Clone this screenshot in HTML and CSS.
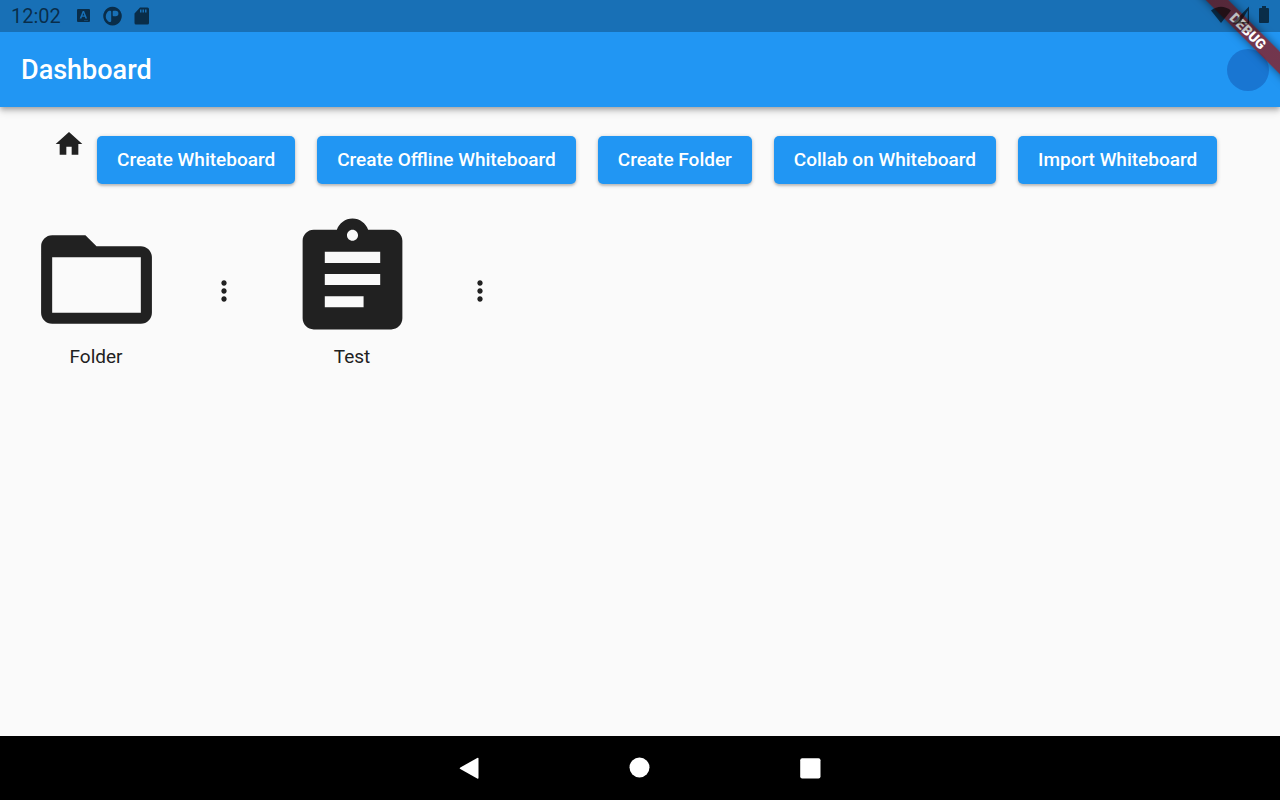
FILE: index.html
```html
<!DOCTYPE html>
<html lang="en">
<head>
<meta charset="utf-8">
<meta name="viewport" content="width=device-width, initial-scale=1">
<title>Dashboard</title>
<link rel="stylesheet" href="styles.css">
</head>
<body>
<div class="status-bar">
  <div class="status-group">
    <span class="clock">12:02</span>
    <svg class="status-left-icons" viewBox="0 0 74 20" width="74" height="20" aria-hidden="true">
      <path fill-rule="evenodd" d="M2 3h11a1 1 0 0 1 1 1v11a1 1 0 0 1-1 1H2a1 1 0 0 1-1-1V4a1 1 0 0 1 1-1zm4.700 2L3.700 12.500h1.700l.6-1.700h2.800l.6 1.700h1.700L8.100 5zm.7 2l.9 2.400H6.500zM8.500 14h1v.8h-1zm2 0h1v.8h-1z"/>
      <path fill-rule="evenodd" d="M36.500 .8a9.300 9.300 0 1 0 .01 0zM33 4.800h1.200a1 1 0 0 1 1 1V15a1 1 0 0 1-1 1H33a6.500 6.500 0 0 1 0-11.200zM37.700 4.800h2a2.700 2.700 0 0 1 0 5.400h-2a1 1 0 0 1-1-1V5.800a1 1 0 0 1 1-1z"/>
      <path fill-rule="evenodd" d="M64 1.500h7.500A1.500 1.500 0 0 1 73 3v14a1.500 1.500 0 0 1-1.500 1.500h-11.500A1.500 1.500 0 0 1 58.500 17V7.500zM64 3.500v3h1.500v-3zm2.500 0v3H68v-3zM69 3.500v3h1.500v-3z"/>
    </svg>
  </div>
  <svg class="status-right-icons" viewBox="0 0 60 20" width="60" height="20" aria-hidden="true">
    <path d="M1 6.500Q11 -1 21 6.500L11 19z"/>
    <path fill-rule="evenodd" d="M39 2.500v17H22.500zM37.700 6.500l-7 11.500h7z"/>
    <path d="M52 4V2h4v2h2a1 1 0 0 1 1 1v13a1 1 0 0 1-1 1h-8a1 1 0 0 1-1-1V5a1 1 0 0 1 1-1z"/>
  </svg>
</div>

<header class="app-bar">
  <h1 class="title">Dashboard</h1>
  <button class="account" type="button" aria-label="Account"></button>
  <div class="debug-corner"><span class="debug-ribbon">DEBUG</span></div>
</header>

<main class="content">
  <div class="toolbar">
    <button class="icon-button" type="button" aria-label="Home">
      <svg viewBox="0 0 24 24" width="32" height="32"><path d="M10 20v-6h4v6h5v-8h3L12 3 2 12h3v8z"/></svg>
    </button>
    <div class="actions">
      <button class="action" type="button">Create Whiteboard</button>
      <button class="action" type="button">Create Offline Whiteboard</button>
      <button class="action" type="button">Create Folder</button>
      <button class="action" type="button">Collab on Whiteboard</button>
      <button class="action" type="button">Import Whiteboard</button>
    </div>
  </div>

  <div class="files">
    <article class="file">
      <button class="file-open" type="button">
        <svg viewBox="0 0 24 24" width="133" height="133" aria-hidden="true"><path d="M20 6h-8l-2-2H4c-1.100 0-1.990.9-1.990 2L2 18c0 1.100.9 2 2 2h16c1.100 0 2-.9 2-2V8c0-1.100-.9-2-2-2zm0 12H4V8h16v10z"/></svg>
        <span class="file-name">Folder</span>
      </button>
      <button class="icon-button" type="button" aria-label="Folder options">
        <svg viewBox="0 0 24 24" width="32" height="32"><path d="M12 8c1.100 0 2-.9 2-2s-.9-2-2-2-2 .9-2 2 .9 2 2 2zm0 2c-1.100 0-2 .9-2 2s.9 2 2 2 2-.9 2-2-.9-2-2-2zm0 6c-1.100 0-2 .9-2 2s.9 2 2 2 2-.9 2-2-.9-2-2-2z"/></svg>
      </button>
    </article>
    <article class="file">
      <button class="file-open" type="button">
        <svg viewBox="0 0 24 24" width="133" height="133" aria-hidden="true"><path d="M19 3h-4.180C14.400 1.840 13.300 1 12 1c-1.300 0-2.400.84-2.820 2H5c-1.100 0-2 .9-2 2v14c0 1.100.9 2 2 2h14c1.100 0 2-.9 2-2V5c0-1.100-.9-2-2-2zm-7 0c.55 0 1 .45 1 1s-.45 1-1 1-1-.45-1-1 .45-1 1-1zm2 14H7v-2h7v2zm3-4H7v-2h10v2zm0-4H7V7h10v2z"/></svg>
        <span class="file-name">Test</span>
      </button>
      <button class="icon-button" type="button" aria-label="Test options">
        <svg viewBox="0 0 24 24" width="32" height="32"><path d="M12 8c1.100 0 2-.9 2-2s-.9-2-2-2-2 .9-2 2 .9 2 2 2zm0 2c-1.100 0-2 .9-2 2s.9 2 2 2 2-.9 2-2-.9-2-2-2zm0 6c-1.100 0-2 .9-2 2s.9 2 2 2 2-.9 2-2-.9-2-2-2z"/></svg>
      </button>
    </article>
  </div>
</main>

<nav class="system-nav" aria-label="System">
  <button class="nav-button" type="button" aria-label="Back">
    <svg viewBox="0 0 24 24" width="24" height="24"><path d="M21.500 2.800v19q0 1.500-1.300.8L3.300 13.100q-1.200-.8 0-1.600L20.200 2Q21.500 1.300 21.500 2.800z"/></svg>
  </button>
  <button class="nav-button" type="button" aria-label="Home screen">
    <svg viewBox="0 0 24 24" width="24" height="24"><circle cx="11.500" cy="11.500" r="10"/></svg>
  </button>
  <button class="nav-button" type="button" aria-label="Recent apps">
    <svg viewBox="0 0 24 24" width="24" height="24"><rect x="1.200" y="2.200" width="20.300" height="20.300" rx="2"/></svg>
  </button>
</nav>
</body>
</html>
```
FILE: styles.css
```css
* {
  box-sizing: border-box;
}

body {
  margin: 0;
  min-height: 100vh;
  display: flex;
  flex-direction: column;
  position: relative;
  background: #fafafa;
  color: #212121;
  font-family: Roboto, "Noto Sans", sans-serif;
  font-size: 19px;
  line-height: 22px;
}

button {
  margin: 0;
  padding: 0;
  border: 0;
  background: none;
  color: inherit;
  font: inherit;
  cursor: pointer;
}

svg {
  display: block;
  fill: currentColor;
}

.status-bar {
  position: absolute;
  top: 0;
  left: 0;
  right: 0;
  z-index: 2;
  height: 32px;
  padding: 0 10px 0 11px;
  display: flex;
  align-items: center;
  justify-content: space-between;
  background: rgba(0, 0, 0, 0.25);
  color: rgba(0, 0, 0, 0.6);
}

.status-group {
  display: flex;
  align-items: center;
  gap: 15px;
}

.clock {
  font-size: 20px;
}

.status-right-icons {
  margin-bottom: 4px;
}

.app-bar {
  position: relative;
  z-index: 1;
  height: 107px;
  padding: 32px 11px 0 21px;
  display: flex;
  align-items: center;
  justify-content: space-between;
  background: #2196f3;
  box-shadow: 0 2px 5px rgba(0, 0, 0, 0.28), 0 5px 7px rgba(0, 0, 0, 0.12);
}

.title {
  margin: 0;
  color: #fff;
  font-size: 27px;
  line-height: 32px;
  font-weight: 500;
}

.account {
  width: 42px;
  height: 42px;
  border-radius: 50%;
  background: #1976d2;
}

.debug-corner {
  position: absolute;
  top: 0;
  right: 0;
  width: 107px;
  height: 107px;
  overflow: hidden;
  pointer-events: none;
}

.debug-ribbon {
  position: absolute;
  top: 23px;
  right: -38px;
  width: 140px;
  transform: rotate(45deg);
  background: linear-gradient(rgba(183, 28, 28, 0.58), rgba(183, 28, 28, 0.58)), rgba(0, 0, 0, 0.4);
  box-shadow: 0 0 8px rgba(0, 0, 0, 0.5);
  color: #fff;
  font-size: 14px;
  line-height: 16px;
  font-weight: 900;
  text-align: center;
}

.content {
  flex: 1;
  padding-top: 21px;
  display: flex;
  flex-direction: column;
  gap: 29px;
}

.toolbar {
  padding: 0 53px;
  display: flex;
  align-items: flex-start;
  gap: 12px;
}

.actions {
  padding-top: 8px;
  display: flex;
  flex-wrap: wrap;
  gap: 22px;
}

.action {
  height: 48px;
  padding: 0 20px;
  border-radius: 5px;
  background: #2196f3;
  box-shadow: 0 1px 4px rgba(0, 0, 0, 0.22), 0 2px 2px rgba(0, 0, 0, 0.12);
  color: #fff;
  font-weight: 500;
}

.files {
  display: grid;
  grid-template-columns: repeat(auto-fill, minmax(240px, 1fr));
}

.file {
  display: grid;
  grid-template-columns: 3fr 1fr;
  align-items: center;
  justify-items: center;
}

.file-open {
  display: flex;
  flex-direction: column;
  align-items: center;
}

.system-nav {
  height: 64px;
  display: flex;
  align-items: center;
  justify-content: center;
  gap: 147px;
  background: #000;
  color: #fff;
}
```
